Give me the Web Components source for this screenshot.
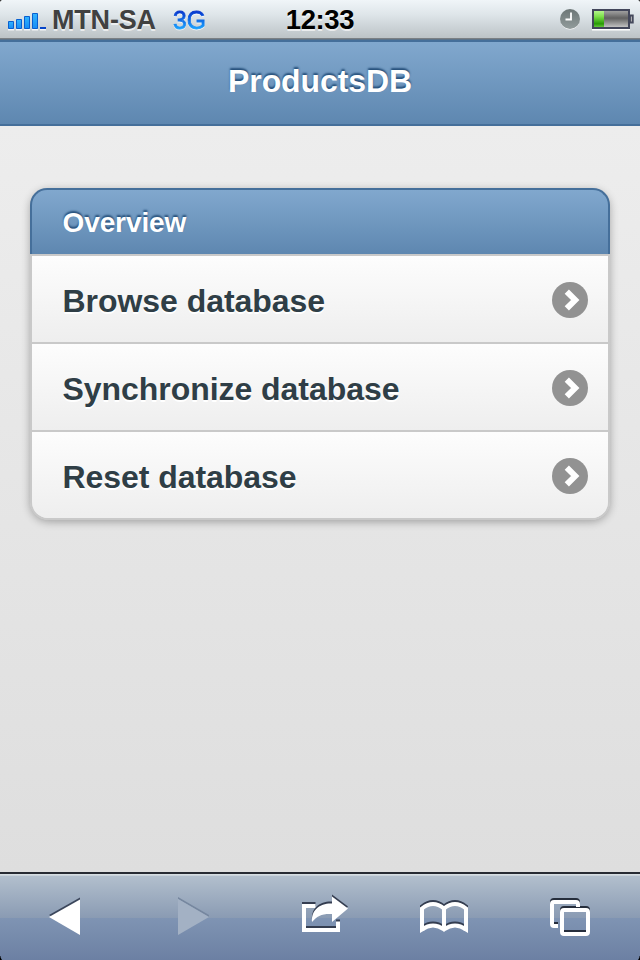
<!DOCTYPE html>
<html lang="en">
<head>
<meta charset="utf-8">
<title>ProductsDB</title>
<style>
html,body{margin:0;height:100%;background:#000}
body{font-family:"Liberation Sans",Arial,sans-serif;overflow:hidden}
</style>
</head>
<body>
<phone-screen>
  <status-bar slot="status" carrier="MTN-SA" network="3G" time="12:33"></status-bar>
  <page-header slot="header">ProductsDB</page-header>
  <list-card>
    <span slot="title">Overview</span>
    <list-row>Browse database</list-row>
    <list-row>Synchronize database</list-row>
    <list-row>Reset database</list-row>
  </list-card>
  <tool-bar slot="toolbar"></tool-bar>
</phone-screen>
<script>
function define(name, render) {
  customElements.define(name, class extends HTMLElement {
    constructor() { super(); this.attachShadow({mode: 'open'}); }
    connectedCallback() { this.shadowRoot.innerHTML = render(this); }
  });
}

define('phone-screen', () => `
<style>
:host{display:flex;flex-direction:column;width:640px;height:960px;overflow:hidden}
main{flex:1;padding:62px 30px 0;background:linear-gradient(#ededed,#dedede)}
</style>
<slot name="status"></slot><slot name="header"></slot><main><slot></slot></main><slot name="toolbar"></slot>`);

define('status-bar', el => `
<style>
:host{display:grid;grid-template-columns:1fr auto 1fr;box-sizing:border-box;height:40px;
 background:radial-gradient(circle at 4px 4px,transparent 4px,#333 5px) 0 0/2px 2px no-repeat,
 radial-gradient(circle at -2px 4px,transparent 4px,#333 5px) 100% 0/2px 2px no-repeat,
 linear-gradient(#f0f5f8 0,#dfe6ea 14px,#bcc3c6 38px,#7b8084 38px,#7b8084 39px,#5d7388 39px);
 font-weight:bold;line-height:40px;text-shadow:0 2px 0 rgba(255,255,255,.65)}
.left,.right{display:flex}
.left svg{margin-left:8px;flex:none}
.carrier{font-size:27px;color:#414141;margin-left:5px;width:121px;letter-spacing:-.2px}
.net{font-size:26px;font-weight:normal;height:40px;text-shadow:none;transform:scaleX(.95);transform-origin:0 0;
 background:linear-gradient(#0634cc 11px,#1aa3ff 29px);-webkit-background-clip:text;background-clip:text;color:transparent;-webkit-text-stroke:.8px transparent;
 filter:drop-shadow(0 1.5px 0 rgba(255,255,255,.7))}
.time{font-size:27.5px;color:#000;letter-spacing:-.4px}
.right{justify-content:flex-end}
</style>
<div class="left">
<svg width="39" height="38" viewBox="8 0 39 38"><defs><linearGradient id="b" x2="0" y2="1"><stop stop-color="#31b4ff"/><stop offset="1" stop-color="#168cf5"/></linearGradient></defs>
<g fill="#fff" opacity=".8"><path d="M8 29h6v1.500H8zM16 29h6v1.500h-6zM24 29h6v1.500h-6zM32 29h6v1.500h-6zM40 29h6v1.500h-6z"/></g>
<g fill="url(#b)" stroke="#085fd0"><path d="M8.500 21.500h5v7h-5z"/><path d="M16.500 19.500h5v9h-5z"/><path d="M24.500 16.500h5v12h-5z"/><path d="M32.500 13.500h5v15h-5z"/></g><path fill="#0645c9" d="M40 27h6v2h-6z"/></svg>
<span class="carrier">${el.getAttribute('carrier')}</span><span class="net">${el.getAttribute('network')}</span></div>
<span class="time">${el.getAttribute('time')}</span>
<div class="right"><svg width="80" height="38" viewBox="560 0 80 38">
<defs><linearGradient id="c" x2="0" y2="1"><stop stop-color="#6c7676"/><stop offset="1" stop-color="#929c9c"/></linearGradient>
<linearGradient id="g" x2="0" y2="1"><stop stop-color="#b4f58c"/><stop offset=".35" stop-color="#7de04a"/><stop offset=".8" stop-color="#279a05"/><stop offset="1" stop-color="#64c83a"/></linearGradient>
<linearGradient id="d" x2="0" y2="1"><stop stop-color="#a6a6a6"/><stop offset=".2" stop-color="#8a8a8a"/><stop offset=".45" stop-color="#606060"/><stop offset="1" stop-color="#ccc"/></linearGradient></defs>
<circle cx="570" cy="20" r="9.600" fill="#fff"/><circle cx="570" cy="19" r="10" fill="url(#c)"/><path d="M571 12.500v7h-5.500" fill="none" stroke="#fff" stroke-width="1.800"/>
<path d="M592 29h38v1.500h-38z" fill="#fff"/><path d="M630 15.500h2.800v7H630z" fill="#bbb" stroke="#45495c" stroke-width="1.800"/>
<path d="M593 10h36v18h-36z" fill="url(#d)" stroke="#42465a" stroke-width="2"/><path d="M594 11h10v16h-10z" fill="url(#g)"/>
</svg></div>`);

define('page-header', () => `
<style>
:host{display:block;box-sizing:border-box;height:86px;padding-top:19px;text-align:center;border:solid #456f9a;border-width:2px 0;
 background:linear-gradient(#81a8ce,#5e87b0);color:#fff;font-weight:bold;font-size:32px;line-height:40px;letter-spacing:-.1px;text-shadow:0 -2px 2px #254f7a}
</style><slot></slot>`);

define('list-card', () => `
<style>
:host{display:block;border-radius:19px;box-shadow:0 2px 8px rgba(0,0,0,.3)}
header{box-sizing:border-box;height:66px;padding-left:30.500px;border:2px solid #456f9a;border-bottom:0;border-radius:17px 17px 0 0;
 background:linear-gradient(#81a8ce,#5e87b0);color:#fff;font-weight:bold;font-size:28px;line-height:66px;letter-spacing:-.1px;text-shadow:0 -2px 2px #254f7a}
section{border:solid #c9c9c9;border-width:0 2px 2px;border-radius:0 0 18px 18px;overflow:hidden}
</style><header><slot name="title"></slot></header><section><slot></slot></section>`);

define('list-row', () => `
<style>
:host{display:flex;justify-content:space-between;align-items:center;box-sizing:border-box;height:88px;padding:2px 20px 0 30.500px;
 border-top:2px solid #c9c9c9;background:linear-gradient(#fdfdfd,#eee);color:#2f3e46;font-size:32px;font-weight:bold;letter-spacing:-.05px;text-shadow:0 2px 0 #fff}
span{line-height:38px;padding-top:1px}
</style><span><slot></slot></span>
<svg width="36" height="36" viewBox="0 0 36 36"><circle cx="18" cy="18" r="18" fill="#929292"/><path d="M14.800 9.600 23.200 18 14.800 26.400" fill="none" stroke="#fff" stroke-width="6"/></svg>`);

const WHITE = 'fill="none" stroke="#fff" stroke-width="4"';
const shaded = (markup, dark = '#343d50') =>
  `<g transform="translate(0 -2)">${markup.replaceAll('#fff', dark)}</g>${markup}`;
const icons = [
  shaded('<path d="M49 917 80 899.500V935z" fill="#fff"/>', '#3b465b'),
  '<path d="M178 897 209 915v2l-31-18z" fill="#76879f"/><path d="M178 899 209 917 178 935z" fill="#a3b1c4"/>',
  shaded(`<path d="M315.500 906H304v24h34v-8.500" ${WHITE}/>`) +
  shaded('<path d="M332 896.500 348 908.500 332 922v-8c-10-.5-15 2-20 8-1-12 8-19 20-18.500z" fill="#fff"/>'),
  shaded(`<path d="M422 930V908.500q11-9 22 0q11-9 22 0v21.500M422 929.500q11-8 22 0q11-8 22 0M444 908v22" ${WHITE}/><path d="M420 927v6l5-3zM468 927v6l-5-3z" fill="#fff"/>`),
  shaded(`<path d="M558 926h-4q-2 0-2-2v-20q0-2 2-2h22q2 0 2 2v3" ${WHITE}/><rect x="562" y="910" width="26" height="24" rx="2" ${WHITE}/>`, '#262e3c')
];
define('tool-bar', () => `
<style>
:host{display:grid;grid-template-columns:repeat(5,1fr);box-sizing:border-box;height:88px;border-top:2px solid #272b33;
 background:radial-gradient(circle at 6px 0,transparent 5px,#000 6px) 0 100%/4px 4px no-repeat,
 radial-gradient(circle at -2px 0,transparent 5px,#000 6px) 100% 100%/4px 4px no-repeat,
 linear-gradient(#dce3e7 0,#c4ced6 2px,#b2bfcd 2px,#8a9bb3 44px,#7f94b3 44px,#6c80a3 86px)}
</style>${icons.map((m, i) => `<svg width="128" height="86" viewBox="${i * 128} 874 128 86">${m}</svg>`).join('')}`);
</script>
</body>
</html>
